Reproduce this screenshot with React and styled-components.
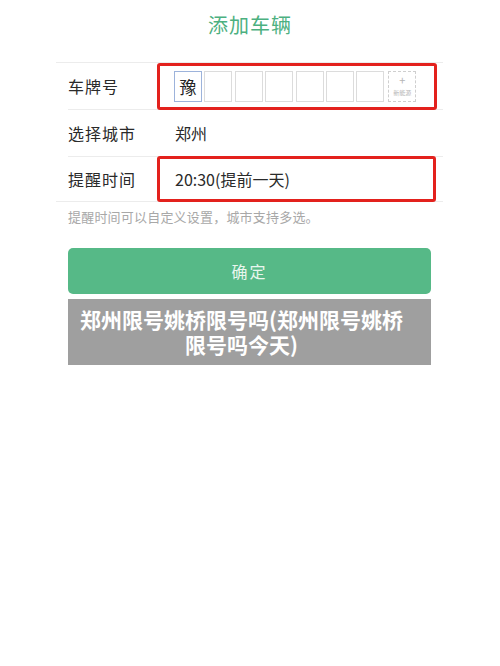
import React from 'react';
import styled, { createGlobalStyle } from "styled-components";

const GlobalStyle = createGlobalStyle`
    body {
        margin: 0;
        background: #fff;
        font-family: "Noto Sans CJK SC", "Noto Sans", sans-serif;
    }
`;

const plate = ["豫", "", "", "", "", "", ""];

function App() {
    return (
        <Page>
            <GlobalStyle />
            <Title>添加车辆</Title>
            <Form>
                <Row>
                    <Inner>
                        <Label>车牌号</Label>
                        <Mark width={280} height={47}>
                            <Plate>
                                {plate.map((c, i) => (
                                    <PlateCell key={i} active={i === 0}>{c}</PlateCell>
                                ))}
                                <NewEnergy>
                                    <span>+</span>
                                    <small>新能源</small>
                                </NewEnergy>
                            </Plate>
                        </Mark>
                    </Inner>
                </Row>
                <Row>
                    <Inner>
                        <Label>选择城市</Label>
                        <Value inset={18}>郑州</Value>
                    </Inner>
                </Row>
                <Row>
                    <Inner last>
                        <Label>提醒时间</Label>
                        <Mark width={279} height={46}>
                            <Value>20:30(提前一天)</Value>
                        </Mark>
                    </Inner>
                </Row>
            </Form>
            <Hint>提醒时间可以自定义设置，城市支持多选。</Hint>
            <Button>确定</Button>
            <Caption>郑州限号姚桥限号吗(郑州限号姚桥限号吗今天)</Caption>
        </Page>
    )
}

const Page = styled.div`
    width: 500px;
    height: 666px;
    display: flex;
    flex-direction: column;
    align-items: flex-start;
`;

const Title = styled.div`
    width: 100%;
    height: 62px;
    box-sizing: border-box;
    padding-top: 11px;
    text-align: center;
    font-size: 20px;
    line-height: 28px;
    color: #4cb080;
    letter-spacing: 1px;
`;

const Form = styled.div`
    margin-left: 56px;
    width: 387px;
    border-top: 1px solid #ececec;
    border-bottom: 1px solid #ececec;
`;

const Row = styled.div`
    padding-left: 12px;
`;

const Inner = styled.div`
    height: ${p => p.last ? 44 : 46}px;
    display: flex;
    align-items: center;
    border-bottom: ${p => p.last ? "none" : "1px solid #ececec"};
`;

const Label = styled.div`
    width: 89px;
    flex-shrink: 0;
    font-size: 16px;
    color: #2a2a2a;
    letter-spacing: 1px;
`;

const Mark = styled.div`
    width: ${p => p.width}px;
    height: ${p => p.height}px;
    box-sizing: border-box;
    border: 3px solid #e3211d;
    border-radius: 3px;
    display: flex;
    align-items: center;
    padding-left: 15px;
`;

const Value = styled.div`
    font-size: 16px;
    color: #2a2a2a;
    padding-left: ${p => p.inset || 0}px;
`;

const Plate = styled.div`
    display: flex;
    gap: 2.4px;
    align-items: center;
    margin-left: -1px;
`;

const PlateCell = styled.div`
    width: 28px;
    height: 31px;
    box-sizing: border-box;
    border: 1px solid ${p => p.active ? "#9db3db" : "#dcdcdc"};
    display: flex;
    align-items: center;
    justify-content: center;
    font-size: 17px;
    color: #222;
`;

const NewEnergy = styled.div`
    width: 28px;
    height: 31px;
    margin-left: 1.5px;
    box-sizing: border-box;
    border: 1px dashed #cfcfcf;
    display: flex;
    flex-direction: column;
    align-items: center;
    justify-content: center;
    color: #b5b5b5;
    span {
        font-size: 11px;
        line-height: 11px;
    }
    small {
        font-size: 6px;
        line-height: 9px;
        margin-top: 2px;
    }
`;

const Hint = styled.div`
    margin: 5px 0 0 68px;
    height: 41px;
    font-size: 13px;
    line-height: 20px;
    color: #a8a8a8;
    letter-spacing: 0.2px;
`;

const Button = styled.div`
    margin-left: 68px;
    width: 363px;
    height: 46px;
    background: #56b987;
    border-radius: 5px;
    display: flex;
    align-items: center;
    justify-content: center;
    color: #e8f6ee;
    font-size: 16px;
    letter-spacing: 2px;
`;

const Caption = styled.div`
    margin: 5px 0 0 68px;
    width: 363px;
    height: 66px;
    box-sizing: border-box;
    padding: 8px 26px 0 10px;
    background: #9f9f9f;
    color: #fff;
    font-size: 21px;
    font-weight: 700;
    line-height: 25px;
    text-align: center;
`;

export default App;
